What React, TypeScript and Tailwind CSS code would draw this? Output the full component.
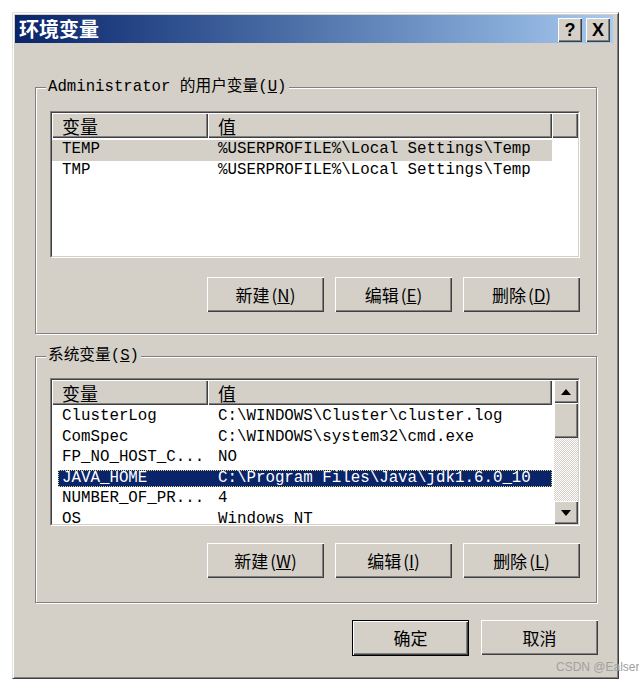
import React from "react";

const mono = "font-['Liberation_Mono','Noto_Sans_CJK_SC',monospace]";
const cjk = "font-['Noto_Sans_CJK_SC','Liberation_Sans',sans-serif]";

const raised =
  "bg-[#d4d0c8] shadow-[inset_1px_1px_0_#ffffff,inset_-1px_-1px_0_#404040,inset_-2px_-2px_0_#808080]";

type Row = { name: string; value: string; state?: "selected" | "inactive" };

const userVars: Row[] = [
  { name: "TEMP", value: "%USERPROFILE%\\Local Settings\\Temp", state: "inactive" },
  { name: "TMP", value: "%USERPROFILE%\\Local Settings\\Temp" },
];

const sysVars: Row[] = [
  { name: "ClusterLog", value: "C:\\WINDOWS\\Cluster\\cluster.log" },
  { name: "ComSpec", value: "C:\\WINDOWS\\system32\\cmd.exe" },
  { name: "FP_NO_HOST_C...", value: "NO" },
  { name: "JAVA_HOME", value: "C:\\Program Files\\Java\\jdk1.6.0_10", state: "selected" },
  { name: "NUMBER_OF_PR...", value: "4" },
  { name: "OS", value: "Windows NT" },
];

function Button({
  label,
  hot,
  isDefault,
}: {
  label: string;
  hot?: string;
  isDefault?: boolean;
}) {
  return (
    <button
      type="button"
      className={`flex h-[35px] w-[117px] items-center justify-center text-[17px] text-black ${cjk} ${raised} ${
        isDefault ? "h-[36px] border border-black" : ""
      }`}
    >
      <span>{label}</span>
      {hot && (
        <span className="ml-[2px]">
          (<span className="underline">{hot}</span>)
        </span>
      )}
    </button>
  );
}

function Header() {
  return (
    <div className={`flex h-[25px] shrink-0 text-[18px] leading-none text-black ${cjk}`}>
      <div className={`flex w-[156px] items-center pl-[10px] ${raised}`}>变量</div>
      <div className={`flex w-[344px] items-center pl-[10px] ${raised}`}>值</div>
      <div className={`flex-1 ${raised}`} />
    </div>
  );
}

function Rows({ rows }: { rows: Row[] }) {
  return (
    <div className={`pt-[2px] text-[15.8px] text-black ${mono}`}>
      {rows.map((r) => {
        if (r.state === "selected") {
          return (
            <div key={r.name} className="flex h-[20.5px] items-center">
              <div className="ml-[6px] flex h-[17px] w-[494px] items-center bg-[#0a246a] text-white outline-1 outline-dotted -outline-offset-1 outline-[#e4d27a]">
                <span className="w-[150px] pl-[4px]">{r.name}</span>
                <span className="pl-[10px]">{r.value}</span>
              </div>
            </div>
          );
        }
        return (
          <div key={r.name} className="flex h-[20.5px] items-center">
            <div
              className={`flex h-full w-[500px] items-center ${
                r.state === "inactive" ? "bg-[#d4d0c8]" : ""
              }`}
            >
              <span className="w-[156px] whitespace-pre pl-[10px]">{r.name}</span>
              <span className="whitespace-pre pl-[10px]">{r.value}</span>
            </div>
          </div>
        );
      })}
    </div>
  );
}

function ListBox({ children, h }: { children: React.ReactNode; h: string }) {
  return (
    <div
      className={`w-[530px] ${h} border border-t-[#808080] border-l-[#808080] border-b-white border-r-white`}
    >
      <div className="flex h-full w-full overflow-hidden border border-t-[#404040] border-l-[#404040] border-b-[#d4d0c8] border-r-[#d4d0c8] bg-white">
        {children}
      </div>
    </div>
  );
}

function Arrow({ up }: { up?: boolean }) {
  return (
    <div className={`flex h-[23px] shrink-0 items-center justify-center ${raised}`}>
      <svg width="10" height="6" viewBox="0 0 10 6">
        {up ? <polygon points="5,0 10,6 0,6" fill="#000" /> : <polygon points="0,0 10,0 5,6" fill="#000" />}
      </svg>
    </div>
  );
}

function Group({
  legend,
  children,
  top,
}: {
  legend: React.ReactNode;
  children: React.ReactNode;
  top: string;
}) {
  return (
    <div
      className={`${top} ml-[20px] w-[562px] border border-[#808080] pl-[14px] pr-[16px] shadow-[inset_1px_1px_0_#ffffff,1px_1px_0_#ffffff]`}
    >
      <div className={`-mt-[11px] ml-[-4px] w-fit bg-[#d4d0c8] px-[2px] text-[15.7px] leading-[20px] text-black ${mono}`}>
        {legend}
      </div>
      {children}
    </div>
  );
}

export default function App() {
  return (
    <div className="relative min-h-[686px] w-[639px] bg-white pl-[12px] pt-[12px]">
      <div className="flex h-[667px] w-[607px] flex-col border border-t-[#e4e2dc] border-l-[#e4e2dc] border-b-[#404040] border-r-[#404040] bg-[#d4d0c8] pb-[2px] pl-[2px] pr-[5px] pt-[2px] shadow-[inset_1px_1px_0_#ffffff,inset_-1px_-1px_0_#808080]">
        {/* title bar */}
        <div className="flex h-[28px] shrink-0 items-center bg-linear-to-r from-[#0a246a] to-[#a6caf0] pl-[4px] pr-[3px]">
          <span className={`flex-1 text-[20px] font-bold leading-none text-white ${cjk}`}>环境变量</span>
          <div className="flex gap-[4px] pt-[2px]">
            <div className={`flex h-[24px] w-[24px] items-center justify-center text-[18px] font-bold text-black font-['Liberation_Sans',sans-serif] ${raised}`}>
              ?
            </div>
            <div className={`flex h-[24px] w-[24px] items-center justify-center text-[18px] font-bold text-black font-['Liberation_Sans',sans-serif] ${raised}`}>
              X
            </div>
          </div>
        </div>

        <Group
          top="mt-[44px]"
          legend={
            <>
              Administrator 的用户变量(<span className="underline">U</span>)
            </>
          }
        >
          <div className="mt-[14px]">
            <ListBox h="h-[147px]">
              <div className="flex flex-1 flex-col">
                <Header />
                <Rows rows={userVars} />
              </div>
            </ListBox>
          </div>
          <div className="mt-[19px] flex justify-end gap-[11px] pb-[21px]">
            <Button label="新建" hot="N" />
            <Button label="编辑" hot="E" />
            <Button label="删除" hot="D" />
          </div>
        </Group>

        <Group
          top="mt-[22px]"
          legend={
            <>
              系统变量(<span className="underline">S</span>)
            </>
          }
        >
          <div className="mt-[12px]">
            <ListBox h="h-[148px]">
              <div className="flex min-w-0 flex-1 flex-col">
                <div className="flex w-[500px] flex-col">
                  <Header />
                </div>
                <Rows rows={sysVars} />
              </div>
              <div className="flex w-[24px] shrink-0 flex-col">
                <Arrow up />
                <div className={`h-[35px] shrink-0 ${raised}`} />
                <div className="flex-1 bg-[repeating-conic-gradient(#d4d0c8_0%_25%,#ffffff_0%_50%)] bg-[length:2px_2px]" />
                <Arrow />
              </div>
            </ListBox>
          </div>
          <div className="mt-[17px] flex justify-end gap-[11px] pb-[24px]">
            <Button label="新建" hot="W" />
            <Button label="编辑" hot="I" />
            <Button label="删除" hot="L" />
          </div>
        </Group>

        <div className="mt-[17px] flex justify-end gap-[12px] pr-[15px]">
          <Button label="确定" isDefault />
          <Button label="取消" />
        </div>
      </div>

      <div className="absolute left-[556px] top-[661px] whitespace-nowrap text-[12px] leading-none text-[#a0a0a0] font-['Liberation_Sans',sans-serif]">
        CSDN @Ealser
      </div>
    </div>
  );
}
